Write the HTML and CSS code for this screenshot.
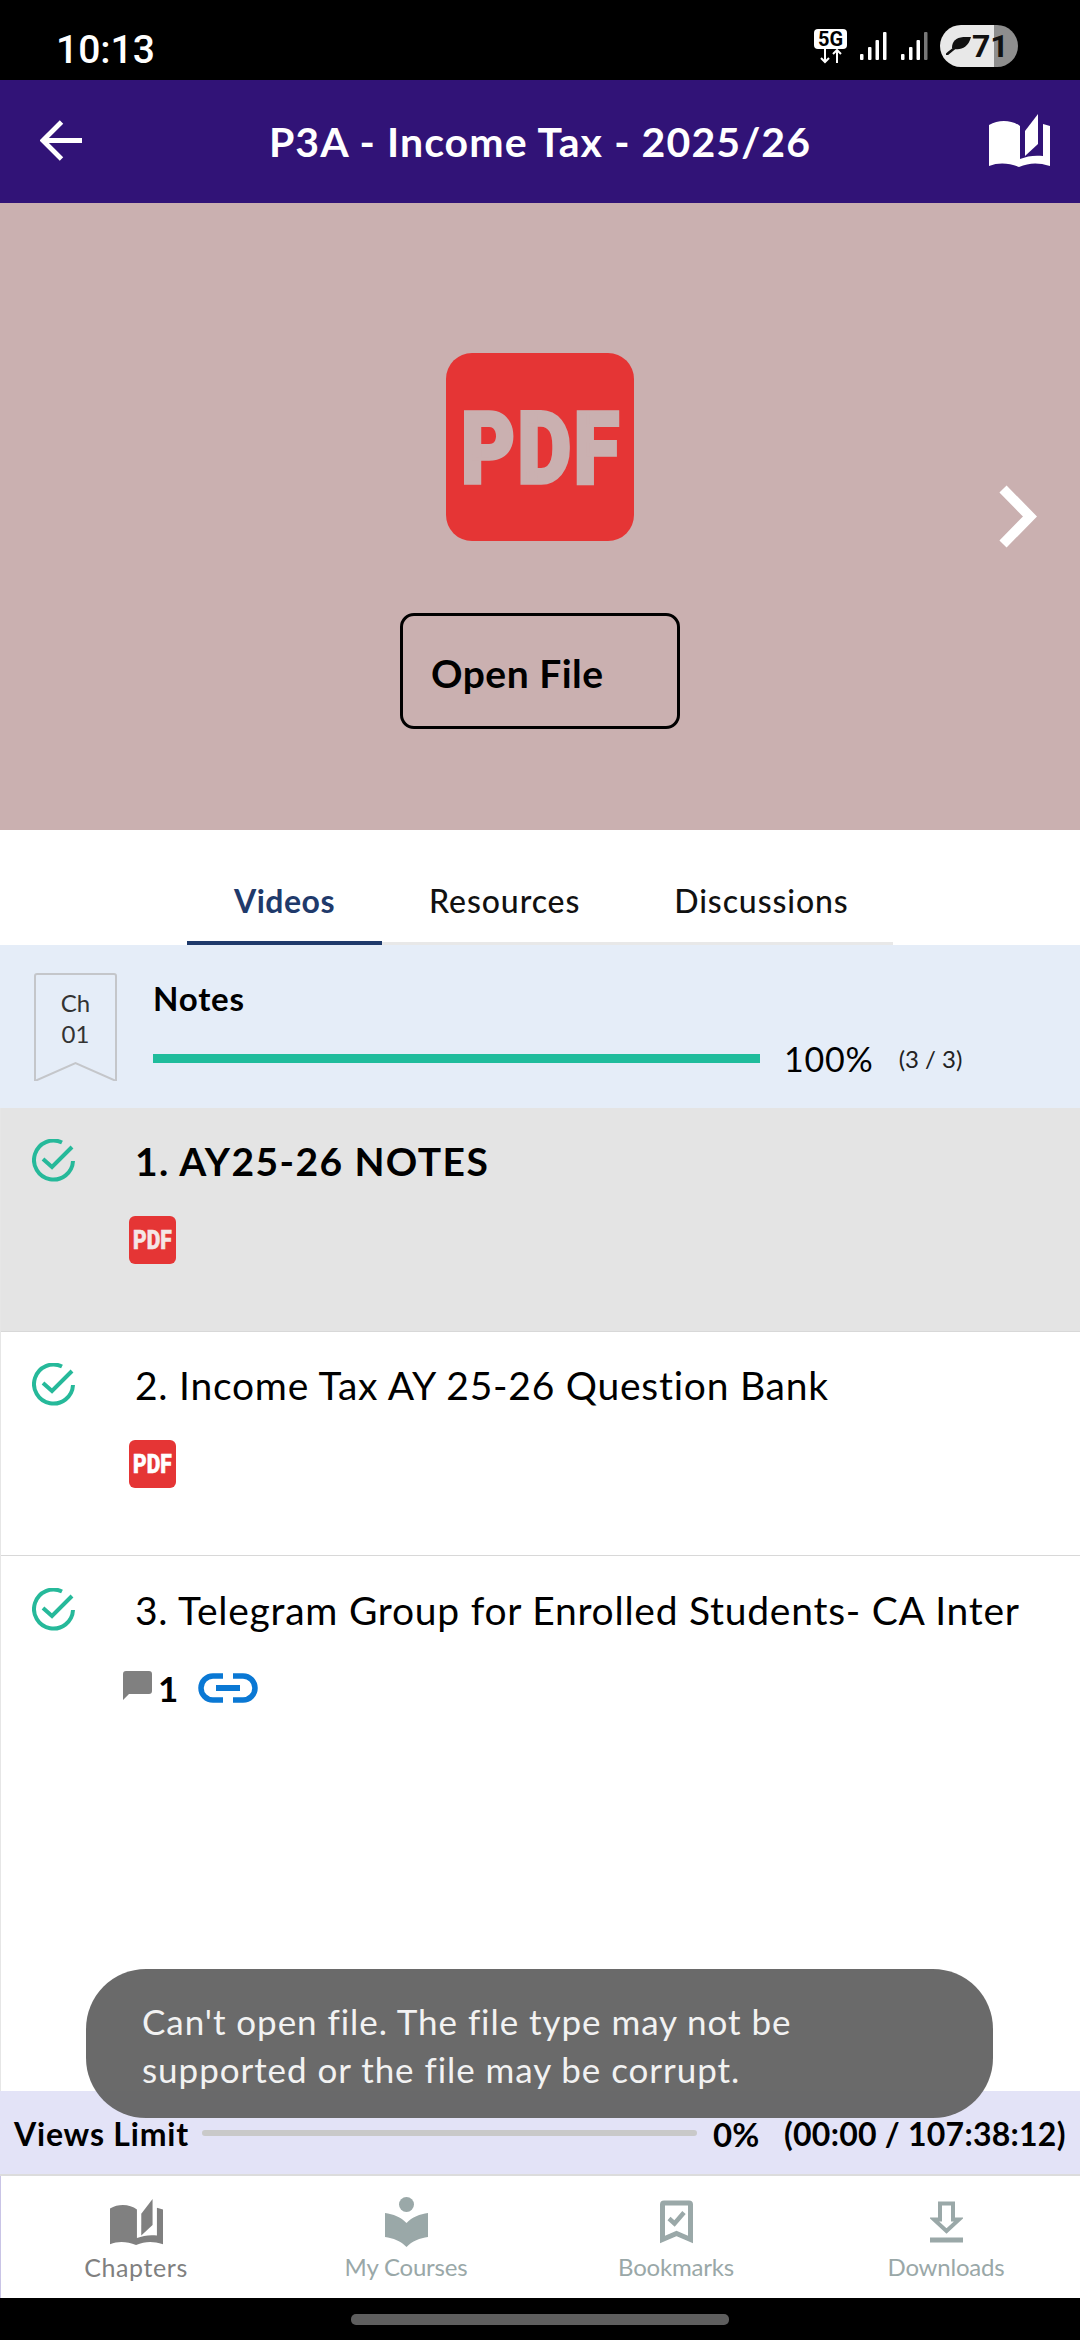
FILE: index.html
```html
<!DOCTYPE html>
<html lang="en">
<head>
<meta charset="utf-8">
<title>P3A - Income Tax - 2025/26</title>
<link rel="stylesheet" href="styles.css">
</head>
<body>
<div class="app">
  <div class="status">
    <span class="time">10:13</span>
    <div class="status-icons">
      <div class="net">
        <span class="net-box">5G</span>
        <svg class="net-arrows" viewBox="0 0 24 15"><path d="M6 0V13M2 9l4 4 4-4M18 14V1M14 5l4-4 4 4" fill="none" stroke="#fff" stroke-width="2"/></svg>
      </div>
      <svg class="signal" viewBox="0 0 27 28"><g fill="#fff"><rect x="0" y="22" width="3.5" height="6" rx="1"/><rect x="8" y="15" width="3.5" height="13" rx="1"/><rect x="15.5" y="8" width="3.5" height="20" rx="1"/><rect x="23" y="0" width="3.5" height="28" rx="1"/></g></svg>
      <svg class="signal" viewBox="0 0 27 28"><g fill="#fff"><rect x="0" y="22" width="3.5" height="6" rx="1"/><rect x="8" y="15" width="3.5" height="13" rx="1"/><rect x="15.5" y="8" width="3.5" height="20" rx="1"/></g><rect x="23" y="0" width="3.5" height="28" rx="1" fill="#777"/></svg>
      <div class="battery">
        <svg class="leaf" viewBox="0 0 25 18"><path d="M25 0C13-1 6 2 6 11c6 3 16 1 19-11Z" fill="#111"/><path d="M0 18c3-2 7-6 14-11" fill="none" stroke="#111" stroke-width="2.500"/></svg>
        <span>71</span>
      </div>
    </div>
  </div>

  <header class="topbar">
    <svg class="back" viewBox="0 0 44 44"><path d="M43 22H4M22 3 3 22l19 19" fill="none" stroke="#fff" stroke-width="5"/></svg>
    <h1 class="title">P3A - Income Tax - 2025/26</h1>
    <svg class="book" viewBox="0 0 61 53"><path fill="#fff" d="M0 11C10 5 23 6 31 12V45C38 42 46 41 54 42V10L61 12V52C48 48 40 49 30 53C20 49 10 48 0 52Z"/><path fill="#fff" d="M36 17 49 0V30L36 42Z"/></svg>
  </header>

  <section class="hero">
    <svg class="pdf pdf-large" viewBox="0 0 188 188">
      <rect width="188" height="188" rx="26"/>
      <text transform="translate(15 130) scale(1 1.2)">PDF</text>
    </svg>
    <button class="open">Open File</button>
    <svg class="next" viewBox="0 0 39 63"><path d="M5 4 32 31.500 5 59" fill="none" stroke="#fff" stroke-width="10"/></svg>
  </section>

  <nav class="tabs">
    <span class="tab active">Videos</span>
    <span class="tab">Resources</span>
    <span class="tab">Discussions</span>
  </nav>

  <section class="chapter">
    <div class="ribbon">
      <svg class="ribbon-shape" viewBox="0 0 83 108"><path d="M1 108V3a2 2 0 0 1 2-2H80a2 2 0 0 1 2 2V108L41.500 90Z" fill="none" stroke="#c4c6ca" stroke-width="2"/></svg>
      <span class="ribbon-text">Ch<br>01</span>
    </div>
    <div class="chapter-body">
      <div class="chapter-name">Notes</div>
      <div class="chapter-progress">
        <div class="bar"></div>
        <span class="pct">100%</span>
        <span class="count">(3 / 3)</span>
      </div>
    </div>
  </section>

  <section class="list">
    <article class="item current">
      <svg class="check" viewBox="0 0 44 44"><path d="M30 3.500A19.500 19.500 0 1 0 41 22" fill="none" stroke="#26b99a" stroke-width="4"/><path d="M11 20l9 8L40 8" fill="none" stroke="#26b99a" stroke-width="4"/></svg>
      <div class="item-body">
        <div class="item-title">1. AY25-26 NOTES</div>
        <svg class="pdf pdf-small" viewBox="0 0 47 48">
          <rect width="47" height="48" rx="6"/>
          <text transform="translate(4 33) scale(1 1.2)">PDF</text>
        </svg>
      </div>
    </article>
    <article class="item">
      <svg class="check" viewBox="0 0 44 44"><path d="M30 3.500A19.500 19.500 0 1 0 41 22" fill="none" stroke="#26b99a" stroke-width="4"/><path d="M11 20l9 8L40 8" fill="none" stroke="#26b99a" stroke-width="4"/></svg>
      <div class="item-body">
        <div class="item-title">2. Income Tax AY 25-26 Question Bank</div>
        <svg class="pdf pdf-small" viewBox="0 0 47 48">
          <rect width="47" height="48" rx="6"/>
          <text transform="translate(4 33) scale(1 1.2)">PDF</text>
        </svg>
      </div>
    </article>
    <article class="item last">
      <svg class="check" viewBox="0 0 44 44"><path d="M30 3.500A19.500 19.500 0 1 0 41 22" fill="none" stroke="#26b99a" stroke-width="4"/><path d="M11 20l9 8L40 8" fill="none" stroke="#26b99a" stroke-width="4"/></svg>
      <div class="item-body">
        <div class="item-title">3. Telegram Group for Enrolled Students- CA Inter</div>
        <div class="meta">
          <svg class="comment" viewBox="0 0 29 29"><path d="M3 0H26a3 3 0 0 1 3 3V20a3 3 0 0 1-3 3H6L0 29V3a3 3 0 0 1 3-3Z" fill="#808080"/></svg>
          <span class="meta-count">1</span>
          <svg class="link" viewBox="0 0 60 30"><path d="M25 3H15a12 12 0 0 0 0 24H25M35 3H45a12 12 0 0 1 0 24H35" fill="none" stroke="#0a78d4" stroke-width="5.500"/><path d="M18 15H42" stroke="#0a78d4" stroke-width="6"/></svg>
        </div>
      </div>
    </article>
  </section>

  <section class="views">
    <span class="views-label">Views Limit</span>
    <div class="track"></div>
    <span class="views-pct">0%</span>
    <span class="views-time">(00:00 / 107:38:12)</span>
  </section>

  <nav class="bottom">
    <div class="nav-item on">
      <svg class="nav-icon" width="53" height="47" viewBox="0 0 61 53"><path fill="#808080" d="M0 11C10 5 23 6 31 12V45C38 42 46 41 54 42V10L61 12V52C48 48 40 49 30 53C20 49 10 48 0 52Z"/><path fill="#808080" d="M36 17 49 0V30L36 42Z"/></svg>
      <span>Chapters</span>
    </div>
    <div class="nav-item">
      <svg class="nav-icon" width="43" height="50" viewBox="0 0 43 50"><circle cx="21.500" cy="7.500" r="7.500" fill="#9aa8a8"/><path d="M0 16C8 17 16 20 21.500 26 27 20 35 17 43 16V40C35 41 27 44 21.500 50 16 44 8 41 0 40Z" fill="#9aa8a8"/></svg>
      <span>My Courses</span>
    </div>
    <div class="nav-item">
      <svg class="nav-icon" width="33" height="43" viewBox="0 0 33 43"><path d="M2.500 39V4a1.500 1.500 0 0 1 1.500-1.500H29a1.500 1.500 0 0 1 1.500 1.500V39L16.500 33Z" fill="none" stroke="#9aa8a8" stroke-width="5"/><path d="M9 18l5.500 5L24 12" fill="none" stroke="#9aa8a8" stroke-width="4.500"/></svg>
      <span>Bookmarks</span>
    </div>
    <div class="nav-item">
      <svg class="nav-icon" width="33" height="41" viewBox="0 0 33 41"><path d="M10 2H23V18H29L16.500 29.500 4 18H10Z" fill="none" stroke="#9aa8a8" stroke-width="4"/><rect x="0" y="36" width="33" height="5" fill="#9aa8a8"/></svg>
      <span>Downloads</span>
    </div>
  </nav>

  <div class="gesture"><span class="pill"></span></div>

  <div class="toast">Can't open file. The file type may not be<br>supported or the file may be corrupt.</div>
</div>
</body>
</html>
```
FILE: styles.css
```css
* { box-sizing: border-box; }
html, body { margin: 0; padding: 0; background: #000; }
body { font-family: Lato, "Noto Sans", sans-serif; color: #000; }

.app {
  position: relative;
  width: 1080px;
  height: 2340px;
  display: flex;
  flex-direction: column;
  background: #fff;
  overflow: hidden;
}

/* status bar */
.status {
  height: 80px;
  flex: none;
  background: #000;
  display: flex;
  align-items: center;
  justify-content: space-between;
  padding: 12px 62px 0 56px;
}
.time { font-family: Roboto, sans-serif; font-size: 39px; font-weight: 500; color: #fff; padding-top: 8px; }
.status-icons { display: flex; align-items: center; }
.net { display: flex; flex-direction: column; align-items: center; width: 33px; margin-right: 13px; }
.net-box {
  width: 33px; height: 20px; background: #fff; border-radius: 4px; color: #000;
  font: 700 20px/20px Roboto, sans-serif; text-align: center;
}
.net-arrows { width: 24px; height: 15px; display: block; }
.signal { width: 27px; height: 28px; margin-right: 14px; }
.signal + .signal { margin-right: 12px; }
.battery {
  width: 78px; height: 42px; border-radius: 21px;
  background: linear-gradient(90deg, #e8e8e8 0 54px, #8e8e8e 54px);
  display: flex; align-items: center; padding-left: 6px;
  font: 700 32px/42px Roboto, sans-serif; color: #111;
}
.leaf { width: 25px; height: 18px; margin-right: 1px; }

/* top bar */
.topbar {
  height: 123px;
  flex: none;
  background: #311377;
  display: flex;
  align-items: center;
  justify-content: space-between;
  padding: 0 30px 0 40px;
}
.back { width: 43px; height: 43px; margin-top: -2px; }
.title { margin: 0 0 0 8px; color: #fff; font-size: 41px; font-weight: 700; letter-spacing: 1.1px; }
.book { width: 61px; height: 53px; margin-top: -2px; }

/* hero */
.hero {
  position: relative;
  height: 627px;
  flex: none;
  background: #cab0b0;
  display: flex;
  flex-direction: column;
  align-items: center;
  padding-top: 150px;
}
.pdf { display: block; }
.pdf rect { fill: #e53535; }
.pdf text { font-family: Roboto, sans-serif; font-weight: 900; }
.pdf-large { width: 188px; height: 188px; }
.pdf-large text { font-size: 83px; letter-spacing: 2.5px; fill: #cab0b0; stroke: #cab0b0; stroke-width: 3px; }
.open {
  margin-top: 72px;
  width: 280px;
  height: 116px;
  background: transparent;
  border: 3px solid #000;
  border-radius: 14px;
  font-family: Lato, sans-serif;
  font-size: 39px;
  font-weight: 700;
  letter-spacing: 0.5px;
  color: #000;
  text-align: left;
  padding: 4px 0 0 28px;
}
.next { position: absolute; right: 43px; top: 282px; width: 39px; height: 63px; }

/* tabs */
.tabs {
  height: 115px;
  flex: none;
  margin-left: 187px;
  width: 706px;
  display: flex;
  border-bottom: 3px solid #e8e8e8;
}
.tab {
  padding: 51px 47px 0;
  height: 115px;
  font-size: 32px;
  line-height: 40px;
  white-space: nowrap;
  letter-spacing: 0.9px;
  color: #111;
  font-weight: 500;
}
.tab.active { color: #1f3a6b; font-weight: 700; border-bottom: 4px solid #1f3a6b; letter-spacing: 0.5px; }

/* chapter */
.chapter {
  height: 163px;
  flex: none;
  background: #e5edf8;
  display: flex;
  padding: 28px 0 0 34px;
}
.ribbon { position: relative; width: 83px; height: 108px; flex: none; }
.ribbon-shape { display: block; width: 83px; height: 108px; }
.ribbon-text {
  position: absolute; left: 0; top: 14px; width: 83px; text-align: center;
  font-size: 24px; line-height: 31px; color: #333;
}
.chapter-body { margin-left: 36px; }
.chapter-name { font-size: 33px; font-weight: 700; line-height: 40px; margin-top: 5px; letter-spacing: 0.8px; }
.chapter-progress { display: flex; align-items: center; margin-top: 22px; height: 36px; }
.bar { width: 607px; height: 9px; background: #1fbc9c; }
.pct { font-size: 34px; margin-left: 24px; letter-spacing: 0.8px; }
.count { font-size: 24px; margin-left: 25px; color: #222; }

/* list */
.list { flex: 1; border-left: 1px solid #e6e6e6; }
.item {
  height: 224px;
  display: flex;
  padding: 30px 0 0 31px;
  border-bottom: 1px solid #d8d8d8;
}
.item.current { background: #e4e4e4; }
.item.last { border-bottom: 0; height: auto; padding-top: 31px; }
.check { width: 44px; height: 44px; flex: none; margin-top: 1px; }
.item-body { margin-left: 53px; }
.item-title {
  font-size: 39px;
  line-height: 46px;
  margin-left: 6px;
  white-space: nowrap;
  letter-spacing: 0.75px;
}
.current .item-title { font-weight: 700; letter-spacing: 1.4px; }
.pdf-small { width: 47px; height: 48px; margin: 32px 0 0; }
.pdf-small text { font-size: 21px; fill: #f4e6e6; stroke: #f4e6e6; stroke-width: 0.4px; }
.item:not(.current) .pdf-small text { fill: #fff; stroke: #fff; }
.meta { display: flex; align-items: center; height: 32px; margin: 39px 0 0 -6px; }
.comment { width: 29px; height: 29px; margin-top: -5px; }
.meta-count { font-size: 35px; font-weight: 700; margin-left: 6px; }
.link { width: 60px; height: 30px; margin-left: 20px; }

/* views */
.views {
  height: 85px;
  flex: none;
  background: #e3e3f7;
  border-bottom: 2px solid #dcdcdc;
  display: flex;
  align-items: flex-start;
  padding: 24px 0 0 14px;
  line-height: 38px;
  white-space: nowrap;
}
.views-label { font-size: 32px; font-weight: 700; width: 188px; letter-spacing: 0.8px; }
.track { width: 495px; height: 6px; background: #c9c9c9; border-radius: 3px; margin-top: 15px; }
.views-pct { font-size: 33px; font-weight: 700; margin-left: 16px; width: 71px; }
.views-time { font-size: 32px; font-weight: 700; letter-spacing: 0.25px; }

/* bottom nav */
.bottom {
  height: 122px;
  flex: none;
  display: grid;
  grid-template-columns: repeat(4, 270px);
  background: #fff;
  border-left: 1px solid #c9c4e6;
}
.nav-item {
  display: flex;
  flex-direction: column;
  align-items: center;
  color: #9aa8a8;
  font-size: 24px;
  height: 122px;
  padding-top: 21px;
  position: relative;
}
.nav-item.on { color: #808080; font-size: 25px; }
.nav-icon { display: block; height: 50px; }
.nav-item span { position: absolute; top: 76px; left: 0; right: 0; text-align: center; letter-spacing: -0.2px; }
.nav-item.on span { letter-spacing: 0.6px; }

/* gesture */
.gesture { height: 42px; flex: none; background: #000; display: flex; justify-content: center; padding-top: 16px; }
.pill { width: 378px; height: 11px; border-radius: 5px; background: #5e5e5e; }

/* toast */
.toast {
  position: absolute;
  left: 86px;
  top: 1969px;
  width: 907px;
  height: 149px;
  border-radius: 60px;
  background: rgba(100, 100, 100, 0.96);
  color: #f2f2f2;
  font-size: 35px;
  line-height: 48px;
  padding: 28px 0 0 56px;
  letter-spacing: 0.95px;
}
```
